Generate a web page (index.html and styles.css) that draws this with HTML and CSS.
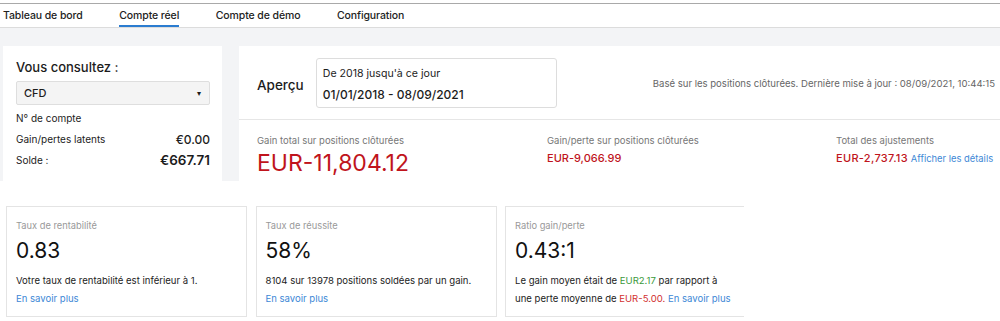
FILE: index.html
```html
<!DOCTYPE html>
<html lang="fr">
<head>
  <meta charset="UTF-8">
  <meta name="viewport" content="width=device-width, initial-scale=1.0">
  <title>Compte réel</title>
  <link rel="stylesheet" href="styles.css">
</head>
<body>
  <nav class="onglets">
    <a class="onglet">Tableau de bord</a>
    <a class="onglet actif">Compte réel</a>
    <a class="onglet">Compte de démo</a>
    <a class="onglet">Configuration</a>
  </nav>

  <main class="apercu-zone">
    <aside class="compte">
      <h3>Vous consultez :</h3>
      <div class="choix">
        <span>CFD</span>
        <span class="fleche">▾</span>
      </div>
      <div class="ligne">N° de compte</div>
      <div class="ligne"><span>Gain/pertes latents</span><b class="montant">€0.00</b></div>
      <div class="ligne"><span>Solde :</span><b class="montant gros">€667.71</b></div>
    </aside>

    <section class="resume">
      <div class="resume-tete">
        <h2>Aperçu</h2>
        <div class="periode">
          <div>De 2018 jusqu'à ce jour</div>
          <div class="dates">01/01/2018 - 08/09/2021</div>
        </div>
        <p class="maj">Basé sur les positions clôturées. Dernière mise à jour : 08/09/2021, 10:44:15</p>
      </div>
      <div class="resume-chiffres">
        <div class="chiffre">
          <div class="etiquette">Gain total sur positions clôturées</div>
          <div class="valeur-grande rouge">EUR-11,804.12</div>
        </div>
        <div class="chiffre">
          <div class="etiquette">Gain/perte sur positions clôturées</div>
          <div class="valeur rouge">EUR-9,066.99</div>
        </div>
        <div class="chiffre">
          <div class="etiquette">Total des ajustements</div>
          <div class="valeur"><span class="rouge">EUR-2,737.13</span> <a class="lien">Afficher les détails</a></div>
        </div>
      </div>
    </section>
  </main>

  <section class="indicateurs">
    <div class="carte">
      <div class="carte-titre">Taux de rentabilité</div>
      <div class="carte-valeur">0.83</div>
      <p class="carte-texte">Votre taux de rentabilité est inférieur à 1.<br><a class="lien">En savoir plus</a></p>
    </div>
    <div class="carte">
      <div class="carte-titre">Taux de réussite</div>
      <div class="carte-valeur">58%</div>
      <p class="carte-texte">8104 sur 13978 positions soldées par un gain.<br><a class="lien">En savoir plus</a></p>
    </div>
    <div class="carte coupee">
      <div class="carte-titre">Ratio gain/perte</div>
      <div class="carte-valeur">0.43:1</div>
      <p class="carte-texte">Le gain moyen était de <span class="vert">EUR2.17</span> par rapport à<br>une perte moyenne de <span class="rouge-clair">EUR-5.00.</span> <a class="lien">En savoir plus</a></p>
    </div>
  </section>
</body>
</html>
```

FILE: styles.css
```css
body {
  font-family: Inter, "Open Sans", sans-serif;
  margin: 0;
  padding: 0;
  background-color: #fff;
  color: #1c1c1c;
}
a {
  cursor: pointer;
}

.onglets {
  display: flex;
  gap: 36.5px;
  margin-top: 3px;
  padding-left: 3px;
  height: 23px;
  border-top: 1px solid #a9a9a9;
  border-bottom: 1px solid #dcdcdc;
}
.onglet {
  padding-top: 3px;
  line-height: 17px;
  font-size: 10.5px;
  font-weight: 500;
  letter-spacing: -0.1px;
  color: #222;
  border-bottom: 2px solid transparent;
}
.onglet.actif {
  border-bottom-color: #2b7cd0;
}

.apercu-zone {
  display: flex;
  gap: 17px;
  height: 153px;
  padding: 18px 0 0 3px;
  box-sizing: border-box;
  background-color: #f3f4f6;
  overflow: hidden;
}
.compte {
  width: 219px;
  flex-shrink: 0;
  padding: 12px 12px 0 13px;
  box-sizing: border-box;
  background: #fff;
}
.compte h3 {
  margin: 0;
  font-size: 13px;
  font-weight: 500;
  line-height: 18px;
}
.choix {
  display: flex;
  justify-content: space-between;
  align-items: center;
  height: 24px;
  margin-top: 5px;
  padding: 0 8px 0 7px;
  box-sizing: border-box;
  background: #f4f4f4;
  border: 1px solid #dedede;
  border-radius: 2px;
  font-size: 11px;
  font-weight: 500;
}
.fleche {
  font-size: 8px;
}
.ligne {
  display: flex;
  justify-content: space-between;
  align-items: center;
  font-size: 10px;
  line-height: 21px;
}
.choix + .ligne {
  margin-top: 3px;
}
.montant {
  font-size: 12px;
  font-weight: 500;
}
.montant.gros {
  font-size: 13.5px;
  font-weight: 600;
}

.resume {
  flex: 1;
  min-width: 0;
  background: #fff;
}
.resume-tete {
  display: flex;
  align-items: center;
  height: 73px;
  padding: 0 5px 0 18px;
  border-bottom: 1px solid #e6e6e6;
}
.resume-tete h2 {
  margin: 4px 12px 0 0;
  font-size: 13.5px;
  font-weight: 500;
}
.periode {
  width: 241px;
  height: 50px;
  padding: 4px 6px 0;
  box-sizing: border-box;
  border: 1px solid #dddddd;
  border-radius: 3px;
  font-size: 10.6px;
  line-height: 21.5px;
}
.dates {
  font-weight: 500;
  font-size: 12px;
}
.maj {
  margin: 2px 0 0 auto;
  font-size: 9.55px;
  color: #666;
  white-space: nowrap;
}
.resume-chiffres {
  display: grid;
  grid-template-columns: 290px 289px minmax(0, 1fr);
  padding: 14px 0 0 18px;
}
.etiquette {
  font-size: 9.5px;
  line-height: 14px;
  color: #777;
}
.valeur-grande {
  margin-top: 3px;
  font-size: 23px;
  line-height: 24px;
}
.valeur {
  margin-top: 1px;
  font-size: 11px;
  font-weight: 500;
  line-height: 18px;
  white-space: nowrap;
}
.valeur .rouge {
  letter-spacing: 0.3px;
}
.valeur .lien {
  font-size: 9.4px;
}
.rouge { color: #c0141c; }
.rouge-clair { color: #d2302f; }
.vert { color: #3b9a3b; }
.lien {
  color: #3d88d6;
  font-weight: 400;
}

.indicateurs {
  display: flex;
  gap: 8.5px;
  width: 744px;
  padding: 25px 0 0 6px;
  box-sizing: border-box;
  overflow: hidden;
}
.carte {
  width: 241px;
  height: 111px;
  flex-shrink: 0;
  padding: 12px 9px 0;
  box-sizing: border-box;
  border: 1px solid #e4e4e4;
}
.carte.coupee {
  border-right: none;
}
.carte-titre {
  font-size: 9.3px;
  line-height: 14px;
  color: #999;
}
.carte-valeur {
  margin-top: 4px;
  font-size: 21px;
  line-height: 28px;
  color: #111;
}
.carte-texte {
  margin: 7px 0 0;
  font-size: 9.55px;
  line-height: 18px;
  color: #222;
  white-space: nowrap;
}
```
